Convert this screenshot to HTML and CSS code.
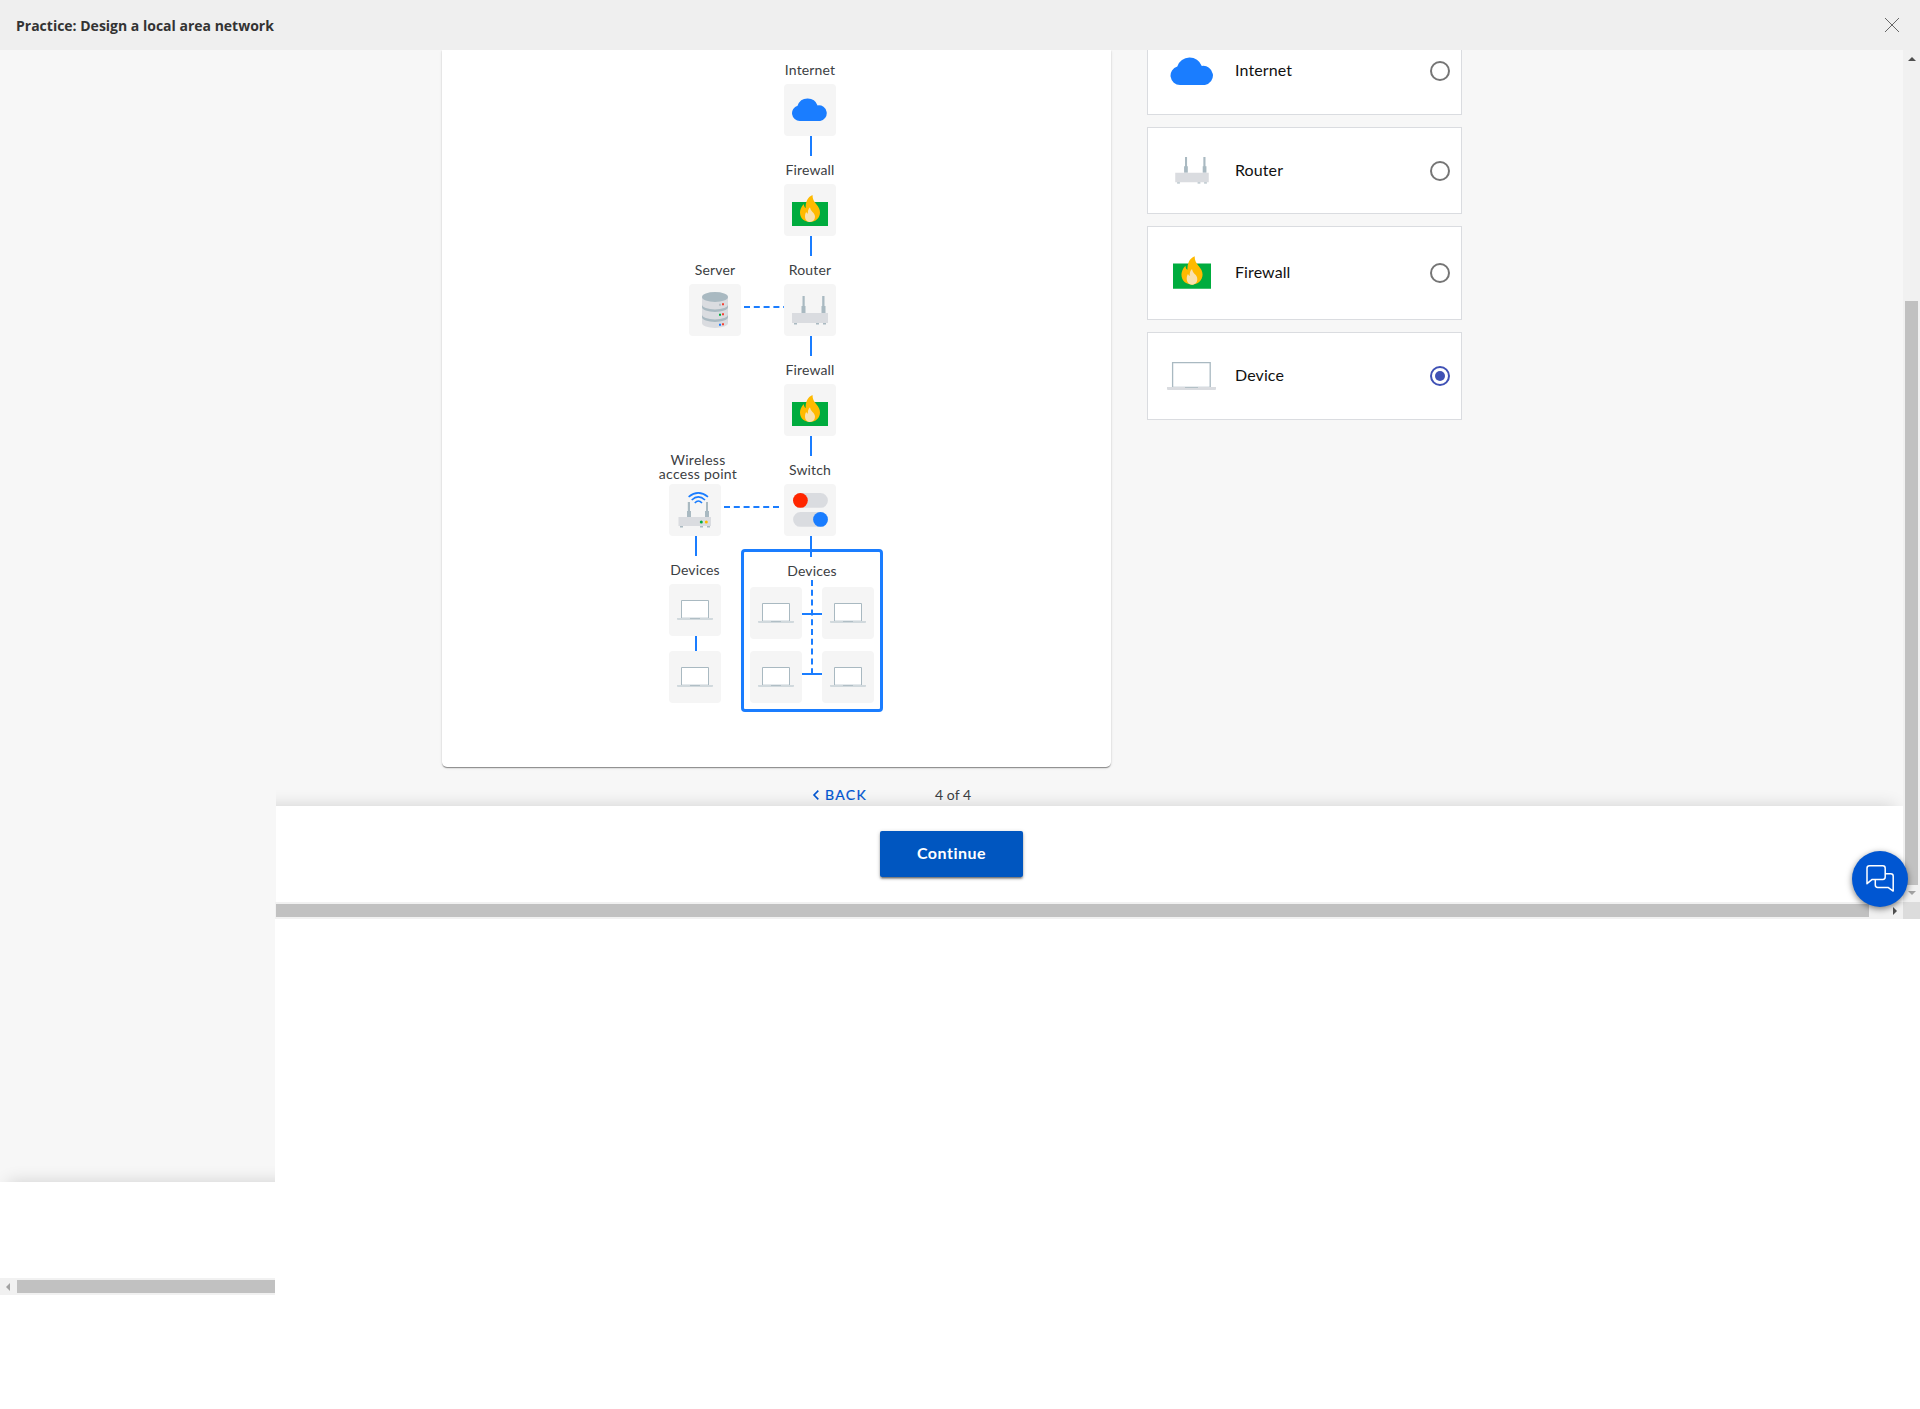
FILE: index.html
```html
<!DOCTYPE html>
<html lang="en">
<head>
<meta charset="utf-8">
<title>Practice: Design a local area network</title>
<link rel="stylesheet" href="styles.css">
</head>
<body>
<svg class="defs" aria-hidden="true">
  <symbol id="cloud" viewBox="0 0 44 28"><path fill="#1a7dff" d="M9.500 28A9.500 9.500 0 0 1 6.800 9.400A13 13 0 0 1 31.300 9A9.600 9.600 0 0 1 34.400 28Z"/></symbol>
  <symbol id="fire" viewBox="0 0 36 31"><path fill="#00ac3e" d="M0 7h36v24H0z"/><path fill="#ffba00" d="M20.5 0C15.5 2 13.5 7 13.7 13C12.6 12.4 12 11 11.8 9C9 12 8 15 8 17.5C8 23.5 12.5 27 18 27C23.5 27 28 23 28 17.5C28 14 26.5 12 24.5 9.5C22 6.5 20.5 4 20.5 0Z"/><path fill="#f9e1b0" d="M18 12.3C16 14.3 15.7 16.5 15.9 18.8C15.1 18.5 14.6 17.8 14.2 17C13.3 18.4 13 19.8 13 21.5C13 24.8 15.2 27 18 27C20.9 27 23 24.8 23 21.8C23 19.8 22 18.3 20.5 17C19 15.6 18.3 14 18 12.3Z"/></symbol>
  <symbol id="router" viewBox="0 0 36 29"><path fill="#a9b9c1" d="M10.5 0h2.2v10h.8v7h-4v-7h1zM30.2 0h2.3v10h1v7h-4v-7h.7zM2 27h3v1.5H2zM24 27h3v1.5h-3zM31 27h3v1.5h-3z"/><path fill="#dadce0" d="M0 17h36v10H0z"/></symbol>
  <symbol id="server" viewBox="0 0 26 36"><path fill="#dadce0" d="M0 5h26v26a13 5 0 0 1-26 0z"/><path fill="#a9b9c1" d="M0 12.5a13 5 0 0 0 26 0v2.5a13 5 0 0 1-26 0zM0 22.5a13 5 0 0 0 26 0v2.5a13 5 0 0 1-26 0z"/><ellipse cx="13" cy="5" rx="13" ry="5" fill="#a9b9c1"/><path fill="#f44336" d="M20 11.2h2v2h-2zM20 21.2h2v2h-2zM20 31.2h2v2h-2z"/><path fill="#b5bfc5" d="M17 11.8h2v2h-2z"/><path fill="#00ac3e" d="M17 21.8h2v2h-2z"/><path fill="#1a7dff" d="M17 31.8h2v2h-2z"/></symbol>
  <symbol id="wap" viewBox="0 0 34 36"><path fill="none" stroke="#1a7dff" stroke-width="1.6" d="M10.6 4.8Q20.3-3 30 4.8M13.7 8Q20.3 1.8 27 8M16.8 11Q20.3 7 24 11"/><path fill="#a9b9c1" d="M9.8 10h2.2v9h1v6H9v-6h.8zM28 10h2v9h1v6h-4v-6h1zM2 34h3v1.6H2zM22 34h3v1.6h-3zM29 34h3v1.6h-3z"/><path fill="#dadce0" d="M.5 25H33v9H.5z"/><circle cx="23.3" cy="30" r="1.5" fill="#00ac3e"/><circle cx="28.3" cy="30" r="1.5" fill="#ffba00"/></symbol>
  <symbol id="switch" viewBox="0 0 35 34"><path fill="#dadce0" d="M7.5 0h20a7.4 7.4 0 0 1 0 14.8h-20a7.4 7.4 0 0 1 0-14.8zM7.5 19h20a7.4 7.4 0 0 1 0 14.8h-20a7.4 7.4 0 0 1 0-14.8z"/><circle cx="7.4" cy="7.4" r="7.4" fill="#ff2600"/><circle cx="27.5" cy="26.4" r="7.4" fill="#1a7dff"/></symbol>
  <symbol id="laptop" viewBox="0 0 36 20"><path fill="#fff" stroke="#a9b9c1" stroke-width="1" d="M4.5.5h27v17.7h-27z"/><path fill="#d1d9dd" d="M0 18h36v1.2q0 .8-1 .8H1q-1 0-1-.8z"/><path fill="#b0bec5" d="M13 18h10v1H13z"/></symbol>
</svg>
<header class="topbar">
  <h1 class="topbar-title">Practice: Design a local area network</h1>
  <svg class="close" viewBox="0 0 14 14"><path d="M0 0L14 14M14 0L0 14"/></svg>
</header>
<main class="workspace">
  <aside class="side">
    <div class="side-body"></div>
    <div class="side-footer"></div>
    <div class="hbar"><i class="arrow left"></i><span class="hthumb"></span></div>
  </aside>
  <section class="frame">
    <div class="frame-main">
      <div class="content">
        <div class="board-col">
          <div class="board">
            <span class="link v l1"></span><span class="link v l2"></span><span class="link v l3"></span><span class="link v l4"></span>
            <span class="link v l6"></span><span class="link v l7"></span>
            <svg class="dash d1"><path d="M0 1H40"/></svg>
            <svg class="dash d2"><path d="M0 1H55"/></svg>
            <span class="label n1">Internet</span><div class="node n1"><svg class="i-cloud"><use href="#cloud"/></svg></div>
            <span class="label n2">Firewall</span><div class="node n2"><svg class="i-fire"><use href="#fire"/></svg></div>
            <span class="label n3">Server</span><div class="node n3"><svg class="i-server"><use href="#server"/></svg></div>
            <span class="label n4">Router</span><div class="node n4"><svg class="i-router"><use href="#router"/></svg></div>
            <span class="label n5">Firewall</span><div class="node n5"><svg class="i-fire"><use href="#fire"/></svg></div>
            <span class="label n6">Wireless<br>access point</span><div class="node n6"><svg class="i-wap"><use href="#wap"/></svg></div>
            <span class="label n7">Switch</span><div class="node n7"><svg class="i-switch"><use href="#switch"/></svg></div>
            <span class="label n8">Devices</span><div class="node n8"><svg class="i-laptop"><use href="#laptop"/></svg></div>
            <div class="node n9"><svg class="i-laptop"><use href="#laptop"/></svg></div>
            <div class="group">
              <span class="group-label">Devices</span>
              <div class="group-grid">
                <div class="tile"><svg class="i-laptop"><use href="#laptop"/></svg></div>
                <div class="tile"><svg class="i-laptop"><use href="#laptop"/></svg></div>
                <div class="tile"><svg class="i-laptop"><use href="#laptop"/></svg></div>
                <div class="tile"><svg class="i-laptop"><use href="#laptop"/></svg></div>
              </div>
            </div>
            <svg class="dash d3"><path d="M1 0V94"/></svg>
            <span class="link h h1"></span><span class="link h h2"></span>
            <span class="link v l5"></span>
          </div>
          <nav class="pager">
            <svg class="chev" viewBox="0 0 6 10"><path d="M5.3.6L1 5L5.3 9.4"/></svg>
            <span class="back">BACK</span>
            <span class="count">4 of 4</span>
          </nav>
        </div>
        <div class="options">
          <label class="option"><span class="pic"><svg class="o-cloud"><use href="#cloud"/></svg></span><span class="name">Internet</span><span class="radio"></span></label>
          <label class="option"><span class="pic"><svg class="o-router"><use href="#router"/></svg></span><span class="name">Router</span><span class="radio"></span></label>
          <label class="option tall"><span class="pic"><svg class="o-fire"><use href="#fire"/></svg></span><span class="name">Firewall</span><span class="radio"></span></label>
          <label class="option last"><span class="pic"><svg class="o-laptop" viewBox="0 0 49 28"><path fill="#fff" stroke="#a9b9c1" stroke-width="1.3" d="M5.600.7h37.600v24.600H5.600z"/><path fill="#dadce0" d="M0 25h49v2q0 1-1 1H1q-1 0-1-1z"/><path fill="#b0bec5" d="M18 25h13v.9H18z"/></svg></span><span class="name">Device</span><span class="radio on"></span></label>
        </div>
      </div>
      <div class="vbar"><i class="arrow up"></i><span class="vthumb"></span><i class="arrow down"></i></div>
      <footer class="footer"><button class="continue">Continue</button></footer>
    </div>
    <div class="hbar wide"><span class="hthumb"></span><i class="arrow right"></i><span class="corner"></span></div>
    <div class="chat"><svg viewBox="0 0 28 28"><path d="M3.5.8h13.3q2.4 0 2.4 2.4v8.800q0 2.400-2.400 2.400H6.200L1 18.700V3.200Q1 .8 3.500.8z"/><path d="M19.200 8.700h5.600q2.400 0 2.400 2.400v15L22 22.400H11.700q-2.400 0-2.400-2.400v-5.600"/></svg></div>
  </section>
</main>
</body>
</html>
```
FILE: styles.css
```css
* { box-sizing: border-box; }
body { margin: 0; height: 1409px; background: #fff; overflow: hidden; font-family: Lato, "Noto Sans", sans-serif; color: #3c4043; }
svg { display: block; overflow: visible; }
.defs { position: absolute; width: 0; height: 0; }

.topbar { height: 50px; background: #efefef; display: flex; align-items: center; justify-content: space-between; padding: 0 21px 0 16px; }
.topbar-title { margin: 0; padding-top: 2px; font: 700 14px/20px "Open Sans", sans-serif; color: #333; }
.close { width: 14px; height: 14px; stroke: #666; stroke-width: 1; }

.workspace { display: flex; align-items: flex-start; }
.side { width: 275px; overflow: hidden; }
.side-body { height: 1132px; background: #f7f7f7; }
.side-footer { width: 400px; height: 96px; background: #fff; position: relative; box-shadow: 0 -8px 16px -8px rgba(0,0,0,.16); }
.hbar { height: 17px; background: #f1f1f1; display: flex; align-items: center; position: relative; }
.hbar .hthumb { flex: 1; height: 13px; background: #c1c1c1; }
.arrow { display: block; width: 0; height: 0; border: 4px solid transparent; }
.left { border-width: 4px 4px 4px 0; border-right-color: #a3a3a3; margin: 0 7px 0 6px; }
.right { border-width: 4px 0 4px 4px; border-left-color: #505050; margin: 0 6px 0 24px; }

.frame { flex: 1; height: 869px; position: relative; }
.frame-main { height: 852px; overflow: hidden; display: grid; grid-template-columns: 1fr 17px; grid-template-rows: 756px 96px; border-left: 1px solid #f7f7f7; }
.content { background: #f7f7f7; display: flex; gap: 36px; padding-left: 166px; overflow: hidden; }
.vbar { grid-row: 1 / 3; grid-column: 2; background: #f1f1f1; display: flex; flex-direction: column; align-items: center; z-index: 2; }
.up { border-width: 0 4px 4px; border-bottom-color: #505050; margin: 7px 0 0; }
.vthumb { width: 13px; height: 584px; margin-top: 240px; background: #c1c1c1; }
.down { border-width: 4px 4px 0; border-top-color: #a3a3a3; margin: 6px 0 0; }
.footer { grid-row: 2; grid-column: 1; margin-left: -40px; background: #fff; position: relative; box-shadow: 0 -8px 16px -8px rgba(0,0,0,.16); padding: 25px 0 0 644px; }
.continue { display: block; width: 143px; height: 46px; border: 0; border-radius: 2px; background: #0056c0; color: #fff; font: 700 16px/42px Lato, sans-serif; letter-spacing: .5px; padding: 0 0 3px; box-shadow: 0 3px 1px -2px rgba(0,0,0,.2), 0 2px 2px rgba(0,0,0,.3), 0 1px 4px rgba(0,0,0,.2); }
.wide { padding-left: 1px; }
.corner { width: 17px; height: 17px; background: #dcdcdc; }

.board-col { width: 669px; flex: none; }
.board { height: 717px; position: relative; background: #fff; border-radius: 0 0 5px 5px; box-shadow: 0 2px 1px -1px rgba(0,0,0,.2), 0 1px 1px rgba(0,0,0,.24), 0 1px 3px rgba(0,0,0,.12); }
.node { position: absolute; }
.node, .tile { width: 52px; height: 52px; border-radius: 4px; background: #f5f5f5; display: flex; align-items: center; justify-content: center; }
.node.n1 { left: 342px; top: 34px; }
.node.n2 { left: 342px; top: 134px; }
.node.n3 { left: 247px; top: 234px; }
.node.n4 { left: 342px; top: 234px; }
.node.n5 { left: 342px; top: 334px; }
.node.n6 { left: 227px; top: 434px; }
.node.n7 { left: 342px; top: 434px; }
.node.n8 { left: 227px; top: 534px; }
.node.n9 { left: 227px; top: 601px; }

.label, .group-label { font-size: 14px; line-height: 14px; letter-spacing: .15px; text-align: center; white-space: nowrap; color: #3c4043; }
.label { position: absolute; width: 100px; }
.label.n1 { left: 318px; top: 13px; }
.label.n2 { left: 318px; top: 113px; }
.label.n3 { left: 223px; top: 213px; }
.label.n4 { left: 318px; top: 213px; }
.label.n5 { left: 318px; top: 313px; }
.label.n6 { left: 206px; top: 403px; letter-spacing: .27px; }
.label.n7 { left: 318px; top: 413px; }
.label.n8 { left: 203px; top: 513px; }

.link { position: absolute; background: #1a7dff; }
.v { width: 2px; height: 20px; left: 368px; }
.l1 { top: 86px; }
.l2 { top: 186px; }
.l3 { top: 286px; }
.l4 { top: 386px; }
.l5 { top: 486px; height: 21px; }
.l6 { left: 253px; top: 486px; }
.l7 { left: 253px; top: 586px; height: 15px; }
.h { width: 20px; height: 2px; left: 360px; }
.h1 { top: 563px; }
.h2 { top: 623px; }
.dash { position: absolute; stroke: #1a7dff; stroke-width: 2; stroke-dasharray: 6 3.8; }
.d1 { left: 302px; top: 256px; width: 40px; height: 2px; }
.d2 { left: 282px; top: 456px; width: 56px; height: 2px; }
.d3 { left: 369px; top: 530px; width: 2px; height: 94px; }

.group { position: absolute; left: 299px; top: 499px; width: 142px; height: 163px; border: 3px solid #1a7dff; border-radius: 4px; padding: 12px 6px 0; display: flex; flex-direction: column; align-items: center; }
.group-grid { display: grid; grid-template-columns: 52px 52px; gap: 12px 20px; margin-top: 9px; }

.i-cloud { width: 36px; height: 23px; margin-top: -1px; }
.i-fire { width: 36px; height: 31px; margin-top: 1px; }
.i-router { width: 36px; height: 29px; }
.i-server { width: 26px; height: 36px; }
.i-wap { width: 34px; height: 36px; }
.i-switch { width: 35px; height: 34px; }
.i-laptop { width: 36px; height: 20px; }

.pager { display: flex; align-items: center; height: 56px; padding-left: 371px; font-size: 14px; line-height: 20px; }
.chev { width: 6px; height: 10px; fill: none; stroke: #0056d2; stroke-width: 1.6; }
.back { margin-left: 6px; width: 110px; color: #0056d2; letter-spacing: 1.3px; -webkit-text-stroke: .2px #0056d2; }
.count { letter-spacing: .05px; }

.options { width: 315px; margin-top: -23px; display: flex; flex-direction: column; gap: 12px; }
.option { flex: none; height: 87px; border: 1px solid #dadce0; background: #fff; display: flex; align-items: center; padding-right: 11px; }
.option:first-child { height: 88px; }
.option.tall { height: 94px; }
.option.last { height: 88px; }
.pic { width: 87px; display: flex; justify-content: center; }
.name { flex: 1; padding-bottom: 2px; font-size: 16px; line-height: 20px; letter-spacing: .1px; color: #111; }
.radio { width: 20px; height: 20px; border: 2px solid #757575; border-radius: 50%; display: flex; align-items: center; justify-content: center; }
.radio.on { border-color: #3f51b5; }
.radio.on::after { content: ""; width: 10px; height: 10px; border-radius: 50%; background: #3f51b5; }
.o-cloud { width: 45px; height: 28px; margin-left: 1px; }
.o-router { width: 34px; height: 27px; }
.o-fire { width: 38px; height: 33px; margin: 0 0 2px 1px; }
.o-laptop { width: 49px; height: 28px; }

.chat { position: absolute; right: 12px; bottom: 12px; width: 56px; height: 56px; border-radius: 50%; background: #0056d2; box-shadow: 0 2px 6px rgba(0,0,0,.5); display: flex; align-items: center; justify-content: center; z-index: 3; }
.chat svg { width: 28px; height: 28px; fill: none; stroke: #fff; stroke-width: 1.5; stroke-linejoin: round; }
```
